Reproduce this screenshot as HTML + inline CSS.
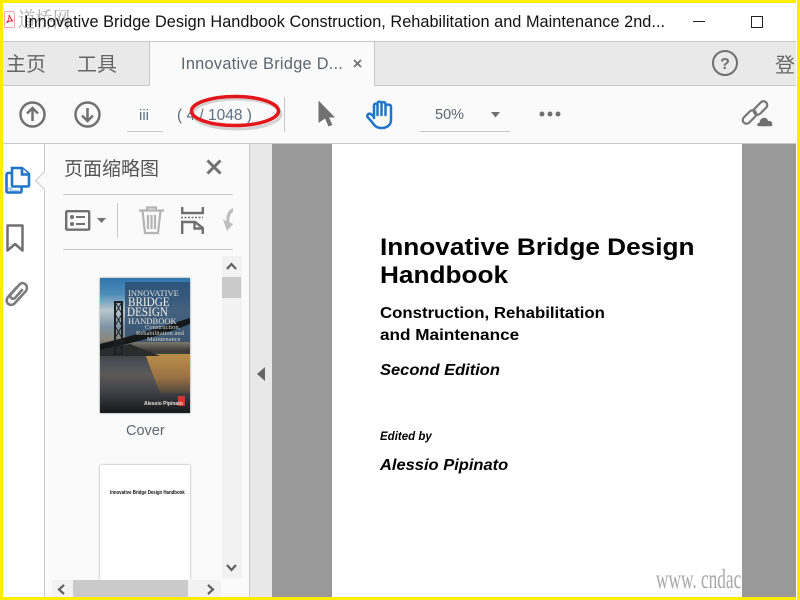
<!DOCTYPE html>
<html lang="zh"><head><meta charset="utf-8"><title>Innovative Bridge Design Handbook</title>
<style>
html,body{margin:0;padding:0}
body{width:800px;height:600px;position:relative;overflow:hidden;background:#fff;font-family:"Liberation Sans","Noto Sans CJK SC",sans-serif}
.a{position:absolute}
.t{position:absolute;white-space:nowrap;line-height:1}
svg{position:absolute;overflow:visible}
.cjk{font-family:"Noto Sans CJK SC","WenQuanYi Zen Hei",sans-serif;font-weight:400}
.pg{color:#000;font-family:"Liberation Sans",sans-serif;font-weight:bold;transform-origin:0 0}
.c{font-family:"Liberation Serif",serif;transform-origin:0 0}
</style></head><body>
<!-- title bar -->
<div class="a" style="left:0;top:41px;width:800px;height:1px;background:#c8c8c8"></div>
<svg style="left:4px;top:11px" width="11" height="18"><path d="M.5 1.500Q.5.5 1.500.5H9.500L10.500 2V15.500Q10.500 16.500 9.500 16.500H1.500Q.5 16.500.5 15.500Z" fill="#fff" stroke="#f0a8a8"/><path d="M2.500 12C4.500 10 5.500 6 5 4 7 8 7.500 9 9 10 6.500 9.500 4.500 10 2.500 12Z" fill="none" stroke="#e03030"/></svg>
<div class="t" style="left:18px;top:9px;font-size:21px;color:#aaa;font-family:'Noto Serif CJK SC',serif;transform-origin:0 0;transform:scaleX(.83)">道桥网</div>
<div class="t" style="left:24px;top:14px;font-size:16.3px;letter-spacing:.035px;color:#111">Innovative Bridge Design Handbook Construction, Rehabilitation and Maintenance 2nd...</div>
<div class="a" style="left:693px;top:21px;width:12px;height:1px;background:#222"></div>
<div class="a" style="left:751px;top:16px;width:10px;height:10px;border:1px solid #222"></div>
<!-- tab bar -->
<div class="a" style="left:0;top:42px;width:800px;height:43px;background:#e9e9e9"></div>
<div class="a" style="left:0;top:85px;width:800px;height:1px;background:#c8c8c8"></div>
<div class="a" style="left:149px;top:42px;width:224px;height:44px;background:#fafafa;border-left:1px solid #c8c8c8;border-right:1px solid #c8c8c8"></div>
<div class="t cjk" style="left:6px;top:53px;font-size:20px;color:#666">主页</div>
<div class="t cjk" style="left:77px;top:53px;font-size:20px;color:#666">工具</div>
<div class="t" style="left:181px;top:56px;font-size:16.3px;letter-spacing:.3px;color:#5c6670">Innovative Bridge D...</div>
<svg style="left:353px;top:59px" width="10" height="10"><path d="M1 1L8 8M8 1L1 8" stroke="#707070" stroke-width="1.800"/></svg>
<svg style="left:712px;top:50px" width="26" height="26"><circle cx="13" cy="13" r="12" fill="none" stroke="#707070" stroke-width="2"/><text x="13" y="19" font-size="16" font-weight="bold" fill="#707070" text-anchor="middle" font-family="Liberation Sans">?</text></svg>
<div class="t cjk" style="left:775px;top:54px;font-size:20px;color:#666">登</div>
<!-- toolbar -->
<div class="a" style="left:0;top:86px;width:800px;height:57px;background:#fafafa"></div>
<div class="a" style="left:0;top:143px;width:800px;height:1px;background:#c8c8c8"></div>
<svg style="left:19px;top:101px" width="27" height="27" fill="none" stroke="#707070"><circle cx="13.500" cy="13.500" r="12" stroke-width="2.500"/><path d="M13.500 20V7M8 12.500L13.500 7L19 12.500" stroke-width="2.500"/></svg>
<svg style="left:74px;top:101px" width="27" height="27" fill="none" stroke="#707070"><circle cx="13.500" cy="13.500" r="12" stroke-width="2.500"/><path d="M13.500 7V20M8 14.500L13.500 20L19 14.500" stroke-width="2.500"/></svg>
<div class="t" style="left:139px;top:108px;font-size:15px;color:#5c6f82">iii</div>
<div class="a" style="left:127px;top:131px;width:36px;height:1px;background:#c8c8c8"></div>
<div class="t" style="left:177px;top:108px;font-size:15.500px;color:#5c6f82">( 4 / 1048 )</div>
<div class="a" style="left:284px;top:97px;width:1px;height:35px;background:#c8c8c8"></div>
<svg style="left:185px;top:90px" width="105" height="45"><ellipse cx="52" cy="24" rx="44" ry="15" fill="none" stroke="#888" stroke-width="3" opacity=".35"/><ellipse cx="50" cy="21" rx="43.500" ry="14.500" fill="none" stroke="#e3161c" stroke-width="3.500"/></svg>
<svg style="left:318px;top:100px" width="18" height="27"><path d="M.5.500L17 17.500H11L14.500 25L10.500 26.500L7 18.500L.5 23Z" fill="#707070"/></svg>
<svg style="left:366px;top:100px" width="29" height="30" fill="none" stroke="#1f76c8" stroke-width="2.500" stroke-linejoin="round" stroke-linecap="round"><path d="M8 18V5.500C8 3 11.500 3 11.500 5.500V15M11.500 15V3.500C11.500 1 15.500 1 15.500 3.500V15M15.500 15V4C15.500 1.500 19.500 1.500 19.500 4V15M19.500 15V6.500C19.500 4 25 4 25 6.500V20C25 25 21 28 15.500 28C10 28 8 25 6 22L1.500 17C.5 14.500 3.500 12.500 5.500 14.500L8 17"/></svg>
<div class="t" style="left:435px;top:108px;font-size:14.500px;color:#5c6670">50%</div>
<div class="a" style="left:420px;top:131px;width:90px;height:1px;background:#c8c8c8"></div>
<svg style="left:491px;top:112px" width="9" height="6"><path d="M0 0H9L4.500 5.500Z" fill="#707070"/></svg>
<svg style="left:538px;top:110px" width="24" height="8" fill="#707070"><circle cx="4" cy="4" r="2.500"/><circle cx="12" cy="4" r="2.500"/><circle cx="20" cy="4" r="2.500"/></svg>
<svg style="left:742px;top:100px" width="32" height="28" fill="none" stroke="#757575" stroke-width="2.200"><rect x="10.500" y="4.250" width="16" height="7.500" rx="3.750" transform="rotate(-45 18.500 8)"/><rect x="-.5" y="13.250" width="16" height="7.500" rx="3.750" transform="rotate(-45 7.500 17)"/><path d="M17 26.800C14 26.800 14 22.500 17 22.500C17.500 16.500 25 15.500 26.500 20.500C31 19.500 32.500 26.800 28.500 26.800Z" fill="#707070" stroke="#fafafa" stroke-width="1"/></svg>
<!-- left rail -->
<div class="a" style="left:44px;top:144px;width:1px;height:453px;background:#c8c8c8"></div>
<svg style="left:35px;top:171px" width="11" height="20"><path d="M10 0L.7 9.500L10 19" fill="#fafafa" stroke="#c8c8c8"/><path d="M10 1V18H10.800V1Z" fill="#fafafa"/></svg>
<svg style="left:5px;top:166px" width="26" height="29" fill="none" stroke="#1f76c8" stroke-width="2.600"><path d="M3 22.500H6V25H14" stroke="#a8cdf0"/><path d="M6 7H3C2 7 1.500 8 1.500 9V25C1.500 26 2 26.500 3 26.500H15C16 26.500 16.500 26 16.500 25V21" /><path d="M7 2H17L24 8V19C24 20 23.500 20.500 22.500 20.500H8.500C7.500 20.500 7 20 7 19Z" fill="#fafafa"/><path d="M17 2V8.500H24" fill="#fafafa"/></svg>
<svg style="left:6px;top:224px" width="18" height="29"><path d="M1.500 1.500H16.500V26.500L9 20L1.500 26.500Z" fill="none" stroke="#707070" stroke-width="2.500" stroke-linejoin="round"/></svg>
<svg style="left:4px;top:280px" width="24" height="28" fill="none" stroke="#7c7c7c" stroke-width="2.600" stroke-linecap="round"><path d="M12 8L4 17C0 22 6 28 11 23L22 11C25 6 20 1 16 4L7 14C5 17 8 20 11 18L18 10"/></svg>
<!-- panel -->
<div class="a" style="left:45px;top:144px;width:204px;height:453px;background:#fafafa"></div>
<div class="a" style="left:249px;top:144px;width:1px;height:453px;background:#c8c8c8"></div>
<div class="t cjk" style="left:64px;top:158px;font-size:19px;color:#555">页面缩略图</div>
<svg style="left:206px;top:159px" width="16" height="16"><path d="M1.500 1.500L14.500 14.500M14.500 1.500L1.500 14.500" stroke="#707070" stroke-width="3"/></svg>
<div class="a" style="left:63px;top:194px;width:170px;height:1px;background:#c8c8c8"></div>
<div class="a" style="left:63px;top:249px;width:170px;height:1px;background:#c8c8c8"></div>
<svg style="left:65px;top:210px" width="26" height="21"><rect x="1.200" y="1.200" width="23" height="18.500" rx="1" fill="none" stroke="#707070" stroke-width="2.400"/><circle cx="7" cy="7" r="2" fill="#707070"/><circle cx="7" cy="14" r="2" fill="#707070"/><path d="M11 7H20M11 14H20" stroke="#707070" stroke-width="2"/></svg>
<svg style="left:97px;top:218px" width="9" height="6"><path d="M0 0H9L4.500 5Z" fill="#707070"/></svg>
<div class="a" style="left:117px;top:203px;width:1px;height:35px;background:#c8c8c8"></div>
<svg style="left:139px;top:206px" width="26" height="29" fill="none" stroke="#b4b4b4" stroke-width="2.200"><path d="M0 4.500H25M8 4V1.500H17V4M3.500 5L6 27H19L21.500 5M9 9V23M12.500 9V23M16 9V23"/></svg>
<svg style="left:181px;top:207px" width="23" height="27" fill="none" stroke="#707070" stroke-width="2.400"><path d="M1.200 0V6H21.800V0"/><path d="M0 10.500H22" stroke-width="1.500" stroke-dasharray="2 1.500"/><path d="M1.200 27V15H14L21.800 21V27M13.500 15V21.500H21.800"/></svg>
<svg style="left:220px;top:207px" width="13" height="26"><path d="M13 1C8 3 6 8 6.500 14L3 12.500L7 24L13 17L9.500 15.500C9 10 10 7 13 5Z" fill="#bdbdbd"/></svg>
<!-- thumbs -->
<div class="a" style="left:100px;top:278px;width:90px;height:135px;box-shadow:0 0 2px #888;background:linear-gradient(180deg,#2f76ad 0,#4f8db8 12%,#b8c6cc 24%,#7f95a8 36%,#8a8678 46%,#3a3a38 54%,#4a4f55 62%,#5c5a58 72%,#3d3f44 85%,#17191d 100%);overflow:hidden">
<div class="a" style="left:25px;top:4px;width:65px;height:60px;background:rgba(44,76,110,.82)"></div>
<svg class="a" style="left:0;top:0" width="90" height="135"><defs><linearGradient id="g" x1="0" y1="0" x2="0" y2="1"><stop offset="0" stop-color="#e2a548"/><stop offset=".6" stop-color="#b07a3c"/><stop offset="1" stop-color="#5a4a3c"/></linearGradient></defs><path d="M45 76H90V115H60Z" fill="url(#g)" opacity=".75"/><path d="M0 66Q40 56 90 40V46Q50 62 0 72Z" fill="#15181b"/><path d="M0 72L30 66L60 78H0Z" fill="#2a2c2c"/><path d="M15 24H22V76H15Z" fill="none" stroke="#1d2125" stroke-width="2"/><path d="M15 24L22 36L15 48L22 60L15 72M22 24L15 36L22 48L15 60L22 72" stroke="#1d2125" stroke-width="1" fill="none"/><rect x="78" y="118" width="7" height="10" fill="#d8332f"/></svg>
<div class="t c" style="left:28px;top:11px;font-size:8.500px;color:#e8e4da">INNOVATIVE</div>
<div class="t c" style="left:28px;top:17px;font-size:13px;color:#f0ece2;transform:scaleX(.86)">BRIDGE</div>
<div class="t c" style="left:27px;top:27px;font-size:13px;color:#f0ece2;transform:scaleX(.86)">DESIGN</div>
<div class="t c" style="left:28px;top:39px;font-size:8.500px;color:#e8e4da">HANDBOOK</div>
<div class="t c" style="left:45px;top:47px;font-size:6.500px;color:#d8d4ca">Construction,</div>
<div class="t c" style="left:36px;top:53px;font-size:6.500px;color:#d8d4ca">Rehabilitation and</div>
<div class="t c" style="left:47px;top:59px;font-size:6.500px;color:#d8d4ca">Maintenance</div>
<div class="t" style="left:44px;top:124px;font-size:5px;color:#e8e4da;font-weight:bold">Alessio Pipinato</div>
</div>
<div class="t" style="left:126px;top:424px;font-size:14.500px;color:#5c6670">Cover</div>
<div class="a" style="left:100px;top:465px;width:90px;height:115px;background:#fff;box-shadow:0 0 2px #999"></div>
<div class="t" style="left:110px;top:491px;font-size:5px;font-weight:bold;color:#111;transform-origin:0 0;transform:scaleX(.87)">Innovative Bridge Design Handbook</div>
<!-- scrollbars -->
<div class="a" style="left:222px;top:256px;width:20px;height:323px;background:#f2f2f2"></div>
<div class="a" style="left:222px;top:277px;width:19px;height:21px;background:#cacaca"></div>
<svg style="left:226px;top:262px" width="11" height="8"><path d="M1 7L5.500 2L10 7" fill="none" stroke="#606060" stroke-width="2.200"/></svg>
<svg style="left:226px;top:564px" width="11" height="8"><path d="M1 1L5.500 6L10 1" fill="none" stroke="#606060" stroke-width="2.200"/></svg>
<div class="a" style="left:52px;top:580px;width:169px;height:17px;background:#f2f2f2"></div>
<div class="a" style="left:73px;top:580px;width:115px;height:17px;background:#cacaca"></div>
<svg style="left:57px;top:584px" width="9" height="11"><path d="M7 1L2 5.500L7 10" fill="none" stroke="#606060" stroke-width="2.200"/></svg>
<svg style="left:206px;top:584px" width="9" height="11"><path d="M2 1L7 5.500L2 10" fill="none" stroke="#606060" stroke-width="2.200"/></svg>
<!-- gutter + page -->
<div class="a" style="left:250px;top:144px;width:22px;height:453px;background:#e8e8e8"></div>
<svg style="left:257px;top:367px" width="9" height="14"><path d="M8 0V14L0 7Z" fill="#666"/></svg>
<div class="a" style="left:272px;top:144px;width:60px;height:453px;background:#999"></div>
<div class="a" style="left:742px;top:144px;width:54px;height:453px;background:#999"></div>
<div class="t pg" style="left:380px;top:236px;font-size:24px;transform:scaleX(1.092)">Innovative Bridge Design</div>
<div class="t pg" style="left:380px;top:264px;font-size:24px;transform:scaleX(1.092)">Handbook</div>
<div class="t pg" style="left:380px;top:306px;font-size:16px;transform:scaleX(1.05)">Construction, Rehabilitation</div>
<div class="t pg" style="left:380px;top:328px;font-size:16px;transform:scaleX(1.072)">and Maintenance</div>
<div class="t pg" style="left:380px;top:363px;font-size:16px;font-style:italic;transform:scaleX(1.03)">Second Edition</div>
<div class="t pg" style="left:380px;top:432px;font-size:11.500px;font-style:italic">Edited by</div>
<div class="t pg" style="left:380px;top:458px;font-size:16px;font-style:italic;transform:scaleX(1.03)">Alessio Pipinato</div>
<!-- watermark -->
<div class="a" style="left:656px;top:560px;width:86px;height:37px;overflow:hidden"><div class="t c" style="left:0;top:6px;font-size:27px;color:#a8a8a8;transform:scaleX(.64)">www. cndac</div></div>
<!-- yellow frame -->
<div class="a" style="left:0;top:0;width:800px;height:3px;background:#ffeb00"></div>
<div class="a" style="left:0;top:597px;width:800px;height:3px;background:#ffeb00"></div>
<div class="a" style="left:0;top:0;width:3px;height:600px;background:#ffeb00"></div>
<div class="a" style="left:796px;top:0;width:1px;height:600px;background:#fff"></div>
<div class="a" style="left:797px;top:0;width:3px;height:600px;background:#ffeb00"></div>
</body></html>
